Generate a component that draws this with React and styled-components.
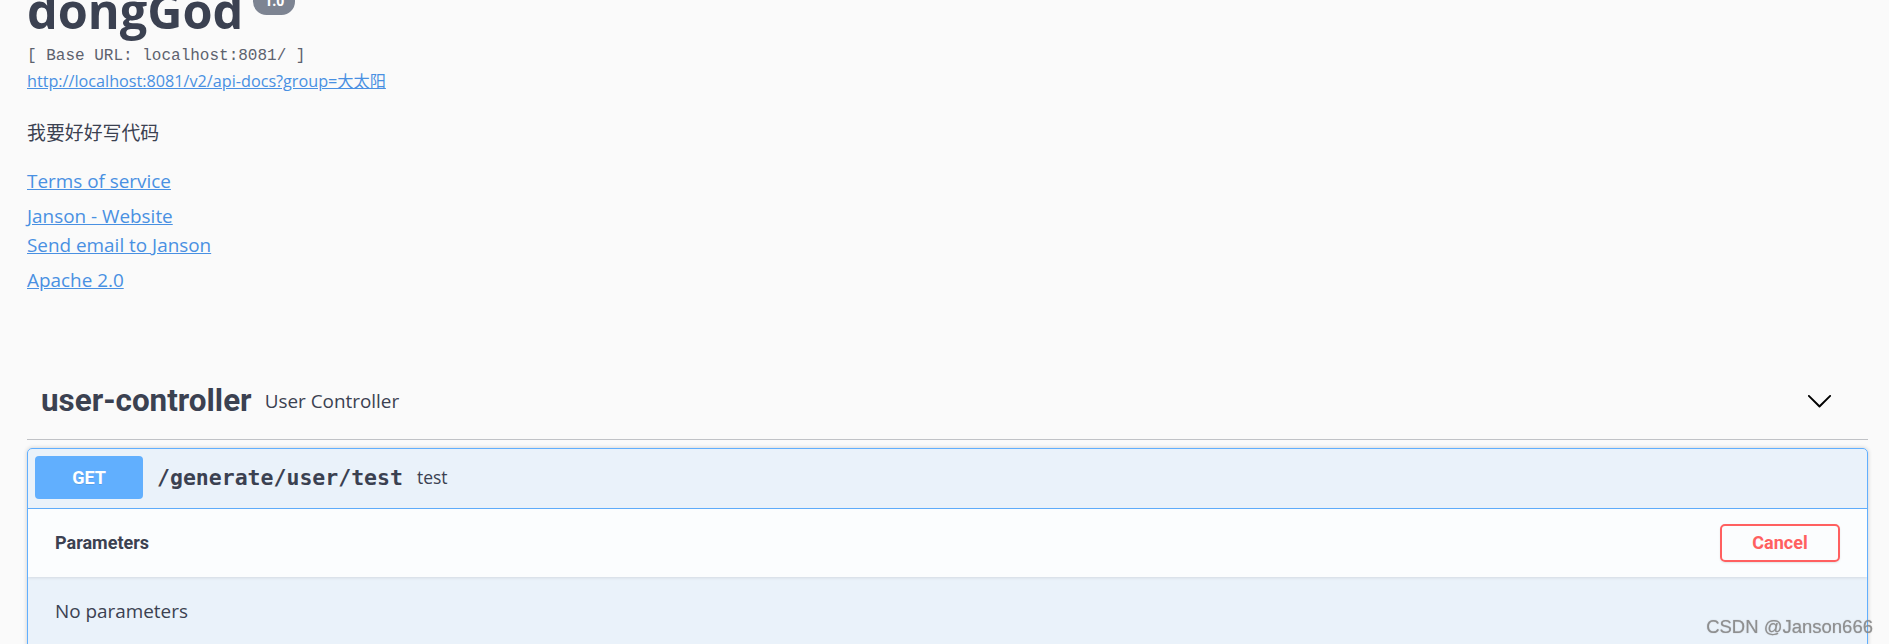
import React from "react";
import styled, { createGlobalStyle } from "styled-components";

const Global = createGlobalStyle`
  html, body { margin: 0; padding: 0; background: #fafafa; }
  body { font-family: "Open Sans", "Noto Sans", sans-serif; color: #3b4151; overflow: hidden; }
  * { box-sizing: border-box; }
`;

const Wrapper = styled.div`
  display: flow-root;
  padding: 0 21px 0 27px;
  min-height: 644px;
`;

const Info = styled.section`
  display: flex;
  flex-direction: column;
  align-items: flex-start;
`;

const Title = styled.h2`
  display: flex;
  align-items: flex-start;
  margin: -14px 0 0;
  font-family: "Open Sans", sans-serif;
  font-weight: 700;
  font-size: 48.6px;
  line-height: 48px;
  color: #3b4151;
`;

const Version = styled.small`
  margin: 2px 0 0 10px;
  padding: 3px 11px 5px;
  border-radius: 57px;
  background: #7d8492;
  color: #fff;
  font-family: "Open Sans", sans-serif;
  font-size: 14px;
  font-weight: 700;
  line-height: 19px;
`;

const BaseUrl = styled.pre`
  margin: 13px 0 0;
  font-family: "Liberation Mono", "DejaVu Sans Mono", monospace;
  font-size: 16px;
  font-weight: 300;
  line-height: 18px;
  color: #5d626e;
`;

const Link = styled.a`
  display: block;
  margin-top: ${(p) => p.$mt || 0}px;
  font-family: "Open Sans", "Noto Sans CJK SC", sans-serif;
  font-size: ${(p) => p.$size || 18.9}px;
  line-height: ${(p) => p.$lh || 28.5}px;
  color: #4990e2;
  text-decoration: underline;
  cursor: pointer;
`;

const Description = styled.p`
  margin: 27px 0 0;
  font-family: "Noto Sans CJK SC", sans-serif;
  font-size: 18.9px;
  line-height: 26px;
  color: #3b4151;
`;

const Tag = styled.div`
  display: flex;
  align-items: center;
  margin-top: 66px;
  padding: 20px 35px 18px 14px;
  border-bottom: 1px solid rgba(59, 65, 81, 0.3);
`;

const TagName = styled.h3`
  margin: 0;
  font-family: Roboto, sans-serif;
  font-weight: 700;
  font-size: 31.4px;
  line-height: 40px;
  color: #3b4151;
`;

const TagDesc = styled.small`
  flex: 1;
  padding: 0 13px;
  font-family: "Open Sans", sans-serif;
  font-size: 18.9px;
  line-height: 26px;
  color: #3b4151;
`;

const Arrow = styled.svg`
  display: block;
  width: 27px;
  height: 27px;
`;

const Opblock = styled.div`
  margin-top: 8px;
  border: 1px solid #61affe;
  border-radius: 5px;
  background: rgba(97, 175, 254, 0.1);
  box-shadow: 0 0 4px rgba(0, 0, 0, 0.19);
  overflow: hidden;
`;

const Summary = styled.div`
  display: flex;
  align-items: center;
  padding: 7px 7px 9px;
  border-bottom: 1px solid #61affe;
`;

const Method = styled.span`
  display: flex;
  align-items: center;
  justify-content: center;
  width: 108px;
  height: 43px;
  border-radius: 4px;
  background: #61affe;
  color: #fff;
  font-family: Roboto, sans-serif;
  font-weight: 700;
  font-size: 18px;
  text-shadow: 0 1px 0 rgba(0, 0, 0, 0.1);
`;

const Path = styled.span`
  padding: 0 14px;
  font-family: "DejaVu Sans Mono", "Liberation Mono", monospace;
  font-weight: 700;
  font-size: 21.5px;
  color: #3b4151;
`;

const SummaryDesc = styled.span`
  font-family: "Open Sans", sans-serif;
  font-size: 17.5px;
  color: #3b4151;
`;

const SectionHeader = styled.div`
  display: flex;
  align-items: center;
  justify-content: space-between;
  min-height: 68px;
  padding: 0 27px;
  background: rgba(255, 255, 255, 0.8);
  box-shadow: 0 1px 3px rgba(0, 0, 0, 0.1);
`;

const SectionTitle = styled.h4`
  margin: 0;
  font-family: Roboto, sans-serif;
  font-weight: 700;
  font-size: 18px;
  color: #3b4151;
`;

const Button = styled.button`
  width: 120px;
  height: 38px;
  border: 2px solid ${(p) => p.$color};
  border-radius: 5px;
  background: transparent;
  color: ${(p) => p.$color};
  font-family: Roboto, sans-serif;
  font-weight: 700;
  font-size: 18px;
  box-shadow: 0 1px 2px rgba(0, 0, 0, 0.1);
  cursor: pointer;
`;

const Body = styled.div`
  padding: 21px 27px 40px;
  font-family: "Open Sans", sans-serif;
  font-size: 18.9px;
  line-height: 26px;
  color: #3b4151;
`;

const Watermark = styled.div`
  position: fixed;
  right: 16px;
  bottom: 6px;
  font-family: "Liberation Sans", Arial, sans-serif;
  font-size: 18.5px;
  color: rgba(140, 140, 140, 0.9);
  text-shadow: 0 0 1px rgba(90, 90, 90, 0.5);
  pointer-events: none;
`;

export default function App() {
  return (
    <>
      <Global />
      <Wrapper>
        <Info>
          <Title>
            dongGod
            <Version>1.0</Version>
          </Title>
          <BaseUrl>[ Base URL: localhost:8081/ ]</BaseUrl>
          <Link $mt={5} $size={16.2} $lh={22}>
            http://localhost:8081/v2/api-docs?group=大太阳
          </Link>
          <Description>我要好好写代码</Description>
          <Link $mt={21.5}>Terms of service</Link>
          <Link $mt={7}>Janson - Website</Link>
          <Link>Send email to Janson</Link>
          <Link $mt={7}>Apache 2.0</Link>
        </Info>

        <Tag>
          <TagName>user-controller</TagName>
          <TagDesc>User Controller</TagDesc>
          <Arrow viewBox="0 0 20 20">
            <path
              fill="#000"
              d="M17.418 6.109c.272-.268.709-.268.979 0s.271.701 0 .969l-7.908 7.83c-.27.268-.707.268-.979 0l-7.908-7.83c-.27-.268-.27-.701 0-.969.271-.268.709-.268.979 0L10 13.25l7.418-7.141z"
            />
          </Arrow>
        </Tag>

        <Opblock>
          <Summary>
            <Method>GET</Method>
            <Path>/generate/user/test</Path>
            <SummaryDesc>test</SummaryDesc>
          </Summary>
          <SectionHeader>
            <SectionTitle>Parameters</SectionTitle>
            <Button $color="#ff6060">Cancel</Button>
          </SectionHeader>
          <Body>No parameters</Body>
        </Opblock>
      </Wrapper>
      <Watermark>CSDN @Janson666</Watermark>
    </>
  );
}
